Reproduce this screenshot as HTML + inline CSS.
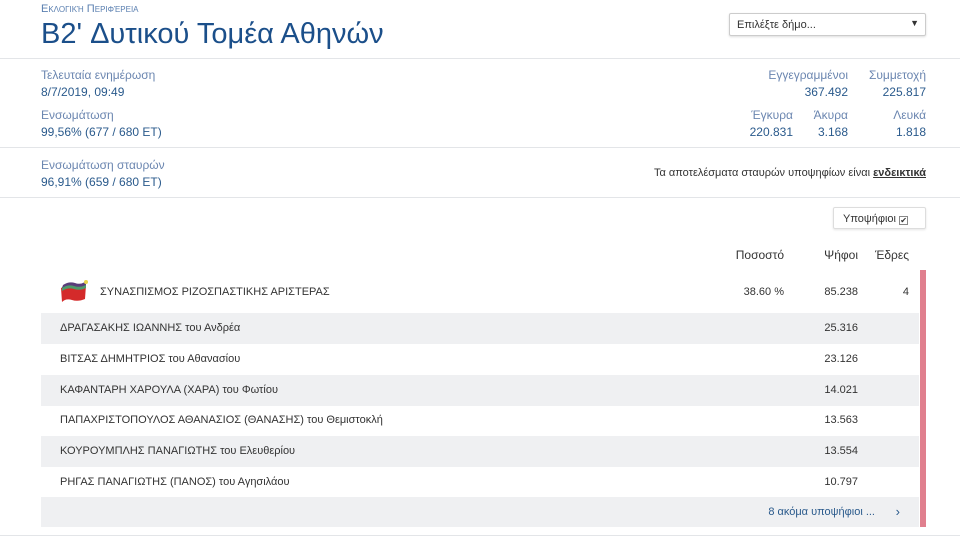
<!DOCTYPE html>
<html><head><meta charset="utf-8"><style>
*{margin:0;padding:0;box-sizing:border-box}
body{width:960px;height:538px;background:#fff;font-family:"Liberation Sans","DejaVu Sans",sans-serif;position:relative;overflow:hidden;color:#333}
.a{position:absolute;white-space:nowrap}
.lbl{color:#6b86b0;font-size:12px}
.val{color:#2a5a8c;font-size:12px}
.hr{position:absolute;left:0;width:960px;height:1px;background:#e3e5e8}
.row{position:absolute;left:41px;width:878px;height:31px;font-size:11px;color:#333}
.row span{position:absolute;top:9px}
.g{background:#eff0f2}
</style></head><body>
<div class="a" style="left:41px;top:3px;font-size:11px;color:#5a7fb0;font-variant:small-caps">Εκλογική Περιφέρεια</div>
<div class="a" style="left:41px;top:18px;font-size:29px;color:#1b4f8a">B2' Δυτικού Τομέα Αθηνών</div>
<div class="a" style="left:729px;top:13px;width:197px;height:23px;border:1px solid #ccc;border-radius:2px;box-shadow:0 1px 2px #ddd;font-size:11px;color:#333;padding:5px 7px">Επιλέξτε δήμο...<span style="position:absolute;right:6px;top:4px;font-size:9px">▼</span></div>
<div class="hr" style="top:58px"></div>
<div class="a lbl" style="left:41px;top:68px">Τελευταία ενημέρωση</div>
<div class="a val" style="left:41px;top:85px">8/7/2019, 09:49</div>
<div class="a lbl" style="left:41px;top:108px">Ενσωμάτωση</div>
<div class="a val" style="left:41px;top:125px">99,56% (677 / 680 ET)</div>
<div class="a lbl" style="right:112px;top:68px">Εγγεγραμμένοι</div>
<div class="a val" style="right:112px;top:85px">367.492</div>
<div class="a lbl" style="right:34px;top:68px">Συμμετοχή</div>
<div class="a val" style="right:34px;top:85px">225.817</div>
<div class="a lbl" style="right:167px;top:108px">Έγκυρα</div>
<div class="a val" style="right:167px;top:125px">220.831</div>
<div class="a lbl" style="right:112px;top:108px">Άκυρα</div>
<div class="a val" style="right:112px;top:125px">3.168</div>
<div class="a lbl" style="right:34px;top:108px">Λευκά</div>
<div class="a val" style="right:34px;top:125px">1.818</div>
<div class="hr" style="top:147px"></div>
<div class="a lbl" style="left:41px;top:158px">Ενσωμάτωση σταυρών</div>
<div class="a val" style="left:41px;top:175px">96,91% (659 / 680 ET)</div>
<div class="a" style="right:34px;top:167px;font-size:11px;color:#333">Τα αποτελέσματα σταυρών υποψηφίων είναι <b style="text-decoration:underline">ενδεικτικά</b></div>
<div class="hr" style="top:197px"></div>
<div class="a" style="left:833px;top:207px;width:93px;height:22px;border:1px solid #ddd;border-radius:2px;box-shadow:0 1px 2px #e5e5e5;font-size:11px;color:#333;padding:5px 9px">Υποψήφιοι <span style="display:inline-block;width:9px;height:9px;border:1px solid #888;font-size:8px;line-height:7px;text-align:center;vertical-align:-1px">✔</span></div>
<div class="a" style="right:176px;top:248px;font-size:12px;color:#333">Ποσοστό</div>
<div class="a" style="right:102px;top:248px;font-size:12px;color:#333">Ψήφοι</div>
<div class="a" style="right:51px;top:248px;font-size:12px;color:#333">Έδρες</div>
<div class="a" style="left:920px;top:270px;width:6px;height:257px;background:#e07f8e"></div>
<svg class="a" style="left:60px;top:279px" width="30" height="26" viewBox="0 0 30 26">
<path d="M1 9 Q8 5 14 7 Q20 9 26 6 L25 20 Q18 23 12 21 Q6 19 2 23 Z" fill="#d42a2a"/>
<path d="M2 8 Q8 4 14 6 Q20 8 26 5 L26 9 Q20 12 14 10 Q8 8 2 12 Z" fill="#4f9a6a"/>
<path d="M3 6 Q9 2 15 4 Q20 6 25 3 L26 6 Q20 9 14 7 Q8 5 2 9 Z" fill="#5a3d7a"/>
<circle cx="26" cy="3" r="2" fill="#e8d44a"/>
</svg>
<div class="a" style="left:100px;top:286px;font-size:11px;color:#333">ΣΥΝΑΣΠΙΣΜΟΣ ΡΙΖΟΣΠΑΣΤΙΚΗΣ ΑΡΙΣΤΕΡΑΣ</div>
<div class="a" style="right:176px;top:286px;font-size:11px">38.60 %</div>
<div class="a" style="right:102px;top:286px;font-size:11px">85.238</div>
<div class="a" style="right:51px;top:286px;font-size:11px">4</div>
<div class="row g" style="top:313px"><span style="left:19px">ΔΡΑΓΑΣΑΚΗΣ ΙΩΑΝΝΗΣ του Ανδρέα</span><span style="right:61px">25.316</span></div>
<div class="row" style="top:344px"><span style="left:19px">ΒΙΤΣΑΣ ΔΗΜΗΤΡΙΟΣ του Αθανασίου</span><span style="right:61px">23.126</span></div>
<div class="row g" style="top:375px"><span style="left:19px">ΚΑΦΑΝΤΑΡΗ ΧΑΡΟΥΛΑ (ΧΑΡΑ) του Φωτίου</span><span style="right:61px">14.021</span></div>
<div class="row" style="top:405px"><span style="left:19px">ΠΑΠΑΧΡΙΣΤΟΠΟΥΛΟΣ ΑΘΑΝΑΣΙΟΣ (ΘΑΝΑΣΗΣ) του Θεμιστοκλή</span><span style="right:61px">13.563</span></div>
<div class="row g" style="top:436px"><span style="left:19px">ΚΟΥΡΟΥΜΠΛΗΣ ΠΑΝΑΓΙΩΤΗΣ του Ελευθερίου</span><span style="right:61px">13.554</span></div>
<div class="row" style="top:467px"><span style="left:19px">ΡΗΓΑΣ ΠΑΝΑΓΙΩΤΗΣ (ΠΑΝΟΣ) του Αγησιλάου</span><span style="right:61px">10.797</span></div>
<div class="row g" style="top:497px;height:30px"><span style="right:44px;color:#2a5a8c">8 ακόμα υποψήφιοι ...</span><span style="right:19px;top:7px;color:#2a5a8c;font-size:13px">›</span></div>
<div class="hr" style="top:535px"></div>
</body></html>
